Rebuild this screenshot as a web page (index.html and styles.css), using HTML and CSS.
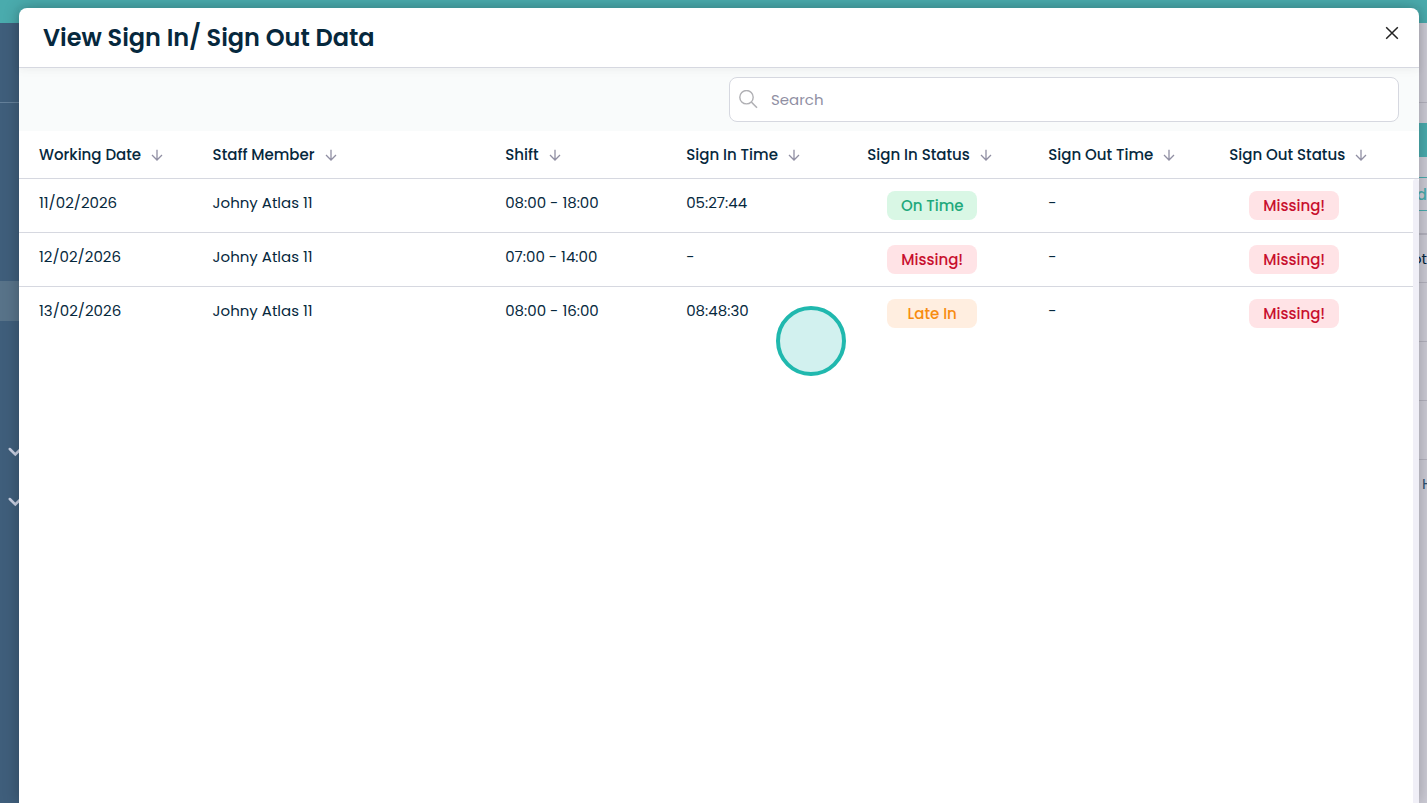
FILE: index.html
```html
<!DOCTYPE html>
<html lang="en">
<head>
    <meta charset="UTF-8">
    <meta name="viewport" content="width=device-width, initial-scale=1.0">
    <title>View Sign In/ Sign Out Data</title>
    <link rel="stylesheet" href="styles.css">
</head>
<body>
    <svg class="defs" aria-hidden="true">
        <symbol id="arrow" viewBox="0 0 12 12">
            <path d="M6 0.8V10.8M1 6L6 11L11 6" fill="none" stroke="currentColor" stroke-width="1.3"/>
        </symbol>
        <symbol id="chevron" viewBox="0 0 14 10">
            <path d="M1.8 2L7.3 7.5L12.8 2" fill="none" stroke="currentColor" stroke-width="2.5" stroke-linecap="round"/>
        </symbol>
    </svg>

    <!-- Page behind the modal -->
    <div class="page">
        <div class="topbar"></div>
        <div class="page-body">
            <div class="sidebar">
                <div class="sidebar-logo"></div>
                <div class="sidebar-active"></div>
                <svg class="chevron"><use href="#chevron"/></svg>
                <svg class="chevron"><use href="#chevron"/></svg>
            </div>
            <div class="content">
                <div class="content-head"></div>
                <div class="content-action"></div>
                <div class="content-tab">d</div>
                <div class="content-title">ot</div>
                <div class="content-row"></div>
                <div class="content-row"></div>
                <div class="content-row"></div>
                <div class="content-foot">H</div>
            </div>
        </div>
    </div>

    <!-- Modal -->
    <div class="modal" role="dialog" aria-labelledby="modalTitle">
        <div class="modal-header">
            <h2 id="modalTitle">View Sign In/ Sign Out Data</h2>
            <button type="button" class="close-btn" aria-label="Close">
                <svg width="14" height="14" viewBox="0 0 14 14"><path d="M1.2 1.2L12.8 12.8M12.8 1.2L1.2 12.8" stroke="currentColor" stroke-width="1.5"/></svg>
            </button>
        </div>

        <div class="toolbar">
            <div class="search-box">
                <svg width="20" height="20" viewBox="0 0 20 20"><circle cx="7.5" cy="7.2" r="6.7" fill="none" stroke="currentColor" stroke-width="1.4"/><path d="M12.3 12L18 17.7" stroke="currentColor" stroke-width="1.6"/></svg>
                <input type="text" placeholder="Search" aria-label="Search">
            </div>
        </div>

        <div class="table-wrap">
            <table>
                <colgroup>
                    <col class="col-date">
                    <col class="col-staff">
                    <col class="col-time">
                    <col class="col-time">
                    <col class="col-time">
                    <col class="col-time">
                    <col>
                </colgroup>
                <thead>
                    <tr>
                        <th><button type="button">Working Date <svg><use href="#arrow"/></svg></button></th>
                        <th><button type="button">Staff Member <svg><use href="#arrow"/></svg></button></th>
                        <th><button type="button">Shift <svg><use href="#arrow"/></svg></button></th>
                        <th><button type="button">Sign In Time <svg><use href="#arrow"/></svg></button></th>
                        <th><button type="button">Sign In Status <svg><use href="#arrow"/></svg></button></th>
                        <th><button type="button">Sign Out Time <svg><use href="#arrow"/></svg></button></th>
                        <th><button type="button">Sign Out Status <svg><use href="#arrow"/></svg></button></th>
                    </tr>
                </thead>
                <tbody>
                    <tr>
                        <td>11/02/2026</td>
                        <td>Johny Atlas 11</td>
                        <td>08:00 - 18:00</td>
                        <td>05:27:44</td>
                        <td><span class="badge on-time">On Time</span></td>
                        <td>-</td>
                        <td><span class="badge missing">Missing!</span></td>
                    </tr>
                    <tr>
                        <td>12/02/2026</td>
                        <td>Johny Atlas 11</td>
                        <td>07:00 - 14:00</td>
                        <td>-</td>
                        <td><span class="badge missing">Missing!</span></td>
                        <td>-</td>
                        <td><span class="badge missing">Missing!</span></td>
                    </tr>
                    <tr>
                        <td>13/02/2026</td>
                        <td>Johny Atlas 11</td>
                        <td>08:00 - 16:00</td>
                        <td>08:48:30</td>
                        <td><span class="badge late">Late In</span></td>
                        <td>-</td>
                        <td><span class="badge missing">Missing!</span></td>
                    </tr>
                </tbody>
            </table>
            <div class="scroll-track"></div>
        </div>
    </div>

    <!-- Click marker -->
    <div class="click-marker"></div>
</body>
</html>
```
FILE: styles.css
```css
* {
    box-sizing: border-box;
}
body {
    margin: 0;
    height: 100vh;
    overflow: hidden;
    position: relative;
    font-family: Poppins, Inter, sans-serif;
    font-size: 15px;
    line-height: 24px;
    color: #06283d;
}
button {
    font: inherit;
    color: inherit;
    background: none;
    border: none;
    padding: 0;
    cursor: pointer;
}
.defs {
    display: none;
}

/* page behind */
.page {
    height: 100%;
    display: flex;
    flex-direction: column;
}
.topbar {
    height: 23px;
    background: #4aabad;
}
.page-body {
    flex: 1;
    display: flex;
}
.sidebar {
    width: 250px;
    background: #3f5e7b;
    color: #c9d0e2;
}
.sidebar-logo {
    height: 80px;
    border-bottom: 1px solid #64809a;
}
.sidebar-active {
    height: 40px;
    margin: 178px 0 126px;
    background: #587389;
}
.chevron {
    display: block;
    width: 14px;
    height: 10px;
    margin: 0 0 40px 8px;
}
.content {
    flex: 1;
    display: flex;
    flex-direction: column;
    align-items: flex-end;
    background: #cccbd5;
    overflow: hidden;
}
.content > div {
    width: 20px;
    text-align: right;
    border-bottom: 1px solid #b3b2be;
}
.content .content-head {
    height: 80px;
}
.content .content-action {
    height: 34px;
    margin: 20px 0;
    background: #4aabad;
    border: none;
}
.content .content-tab {
    height: 34px;
    padding-top: 5px;
    border-top: 1px solid #4aabad;
    border-bottom: 1px solid #4aabad;
    color: #4aabad;
    font-weight: 500;
}
.content .content-title {
    height: 50px;
    margin-top: 22px;
    padding-top: 12px;
    border-top: 2px solid #b3b2be;
}
.content-row {
    height: 59px;
}
.content .content-foot {
    padding: 12px 0 0 15px;
    border: none;
    text-align: left;
    color: #2d5070;
}

/* modal */
.modal {
    position: absolute;
    top: 8px;
    right: 8px;
    bottom: 0;
    left: 19px;
    display: flex;
    flex-direction: column;
    background: #fff;
    border-radius: 8px 8px 0 0;
    box-shadow: 0 0 16px rgba(0, 0, 0, 0.25);
}
.modal-header {
    display: flex;
    justify-content: space-between;
    align-items: center;
    height: 60px;
    padding: 0 20px 0 24px;
    border-bottom: 1px solid #d6d8e0;
    box-shadow: 0 2px 8px rgba(0, 0, 0, 0.08);
}
.modal-header h2 {
    margin: 0;
    font-size: 24px;
    line-height: 36px;
    font-weight: 600;
}
.close-btn {
    display: flex;
    margin-bottom: 10px;
    color: #222;
}
.toolbar {
    display: grid;
    grid-template-columns: 1fr 1fr;
    gap: 20px;
    padding: 9px 20px;
    background: rgba(240, 244, 244, 0.4);
}
.search-box {
    grid-column: 2;
    display: flex;
    align-items: center;
    gap: 12px;
    height: 45px;
    padding: 0 9px;
    background: #fff;
    border: 1px solid #d6d8e0;
    border-radius: 8px;
    color: #b0b0b4;
}
.search-box input {
    flex: 1;
    border: none;
    outline: none;
    padding: 0;
    font: inherit;
    color: #06283d;
}
.search-box input::placeholder {
    color: #908fa3;
}

/* table */
.table-wrap {
    position: relative;
    flex: 1;
}
table {
    width: 100%;
    table-layout: fixed;
    border-collapse: separate;
    border-spacing: 0;
}
.col-date {
    width: 12.4%;
}
.col-staff {
    width: 20.9%;
}
.col-time {
    width: 12.93%;
}
th, td {
    padding: 12px 0 12px 20px;
    text-align: left;
    vertical-align: top;
    border-bottom: 1px solid #d6d8e0;
    white-space: nowrap;
}
th {
    padding-bottom: 11px;
    font-weight: 500;
}
th button {
    display: flex;
    align-items: center;
    gap: 10px;
}
th svg {
    width: 12px;
    height: 12px;
    color: #908fa3;
}
tbody tr:last-child td {
    border-bottom: none;
}
.badge {
    display: block;
    width: 90px;
    height: 29px;
    margin-left: 20px;
    border-radius: 8px;
    line-height: 29px;
    text-align: center;
    font-weight: 500;
}
.on-time {
    background: #d9f7e5;
    color: #1fa97c;
}
.missing {
    background: #ffe3e6;
    color: #c8102e;
}
.late {
    background: #ffeee0;
    color: #f78c10;
}
.scroll-track {
    position: absolute;
    top: 48px;
    right: 0;
    bottom: 0;
    width: 6px;
    background: #f0eff7;
    border-radius: 6px 6px 0 0;
}
.click-marker {
    position: absolute;
    top: 306px;
    left: 776px;
    width: 70px;
    height: 70px;
    border: 4px solid #20b8ae;
    border-radius: 50%;
    background: rgba(32, 184, 174, 0.2);
}
```
